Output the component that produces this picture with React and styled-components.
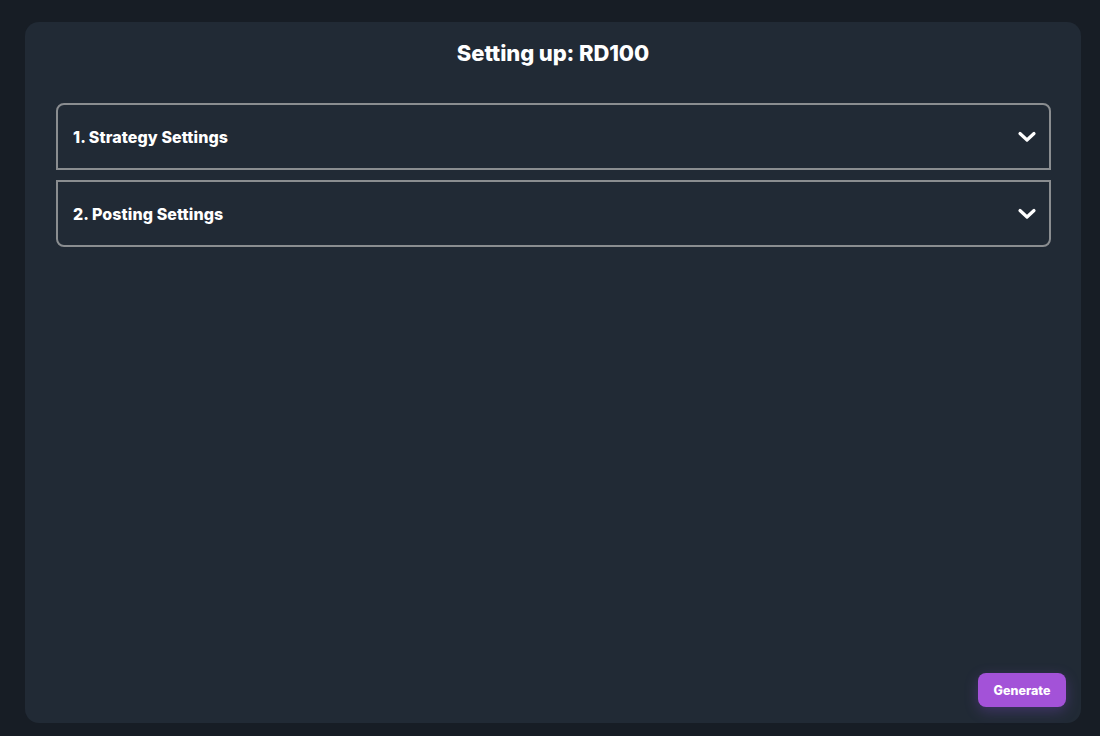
import React from "react";
import styled, { createGlobalStyle } from "styled-components";

const GlobalStyle = createGlobalStyle`
	html, body {
		margin: 0;
		padding: 0;
		background: #171d25;
		font-family: Inter, "Noto Sans", sans-serif;
		color: #ffffff;
	}
`;

const sections = ["1. Strategy Settings", "2. Posting Settings"];

const Chevron = () => (
	<svg width="20" height="12" viewBox="0 0 20 12" fill="none">
		<path d="M3 2.5 L10 9 L17 2.5" stroke="#ffffff" strokeWidth="3.2" strokeLinecap="round" strokeLinejoin="round" />
	</svg>
);

export default function App() {
	return (
		<>
			<GlobalStyle />
			<Page>
				<Card>
					<Title>Setting up: RD100</Title>
					<Accordion>
						{sections.map((label, i) => (
							<Item key={label} first={i === 0} last={i === sections.length - 1}>
								<ItemLabel>{label}</ItemLabel>
								<Chevron />
							</Item>
						))}
					</Accordion>
					<Footer>
						<Generate>Generate</Generate>
					</Footer>
				</Card>
			</Page>
		</>
	);
}

const Page = styled.div`
	box-sizing: border-box;
	width: 1100px;
	height: 736px;
	padding: 22px 19px 13px 25px;
	display: flex;
`;

const Card = styled.div`
	flex: 1;
	display: flex;
	flex-direction: column;
	background: #212a35;
	border-radius: 14px;
	padding: 0 15px 16px 31px;
`;

const Title = styled.h1`
	margin: 0;
	padding-top: 18px;
	padding-right: 16px;
	text-align: center;
	font-size: 22px;
	font-weight: 800;
	line-height: 26px;
	letter-spacing: -0.1px;
`;

const Accordion = styled.div`
	margin-top: 37px;
	margin-right: 15px;
	display: flex;
	flex-direction: column;
	gap: 10px;
`;

const Item = styled.div`
	box-sizing: border-box;
	height: 67px;
	display: flex;
	align-items: center;
	justify-content: space-between;
	padding: 0 12px 0 15px;
	border: 2px solid #8a8d90;
	border-radius: ${(p) => (p.first ? "8px 8px" : "0 0")} ${(p) => (p.last ? "8px 8px" : "0 0")};
`;

const ItemLabel = styled.span`
	font-size: 16px;
	font-weight: 800;
	letter-spacing: 0.1px;
`;

const Footer = styled.div`
	margin-top: auto;
	display: flex;
	justify-content: flex-end;
`;

const Generate = styled.button`
	width: 88px;
	height: 34px;
	border: none;
	border-radius: 8px;
	background: #a352d8;
	color: #ffffff;
	font-family: Inter, "Noto Sans", sans-serif;
	font-size: 12.5px;
	font-weight: 800;
	box-shadow: 0 4px 14px rgba(140, 80, 220, 0.3);
	cursor: pointer;
`;
